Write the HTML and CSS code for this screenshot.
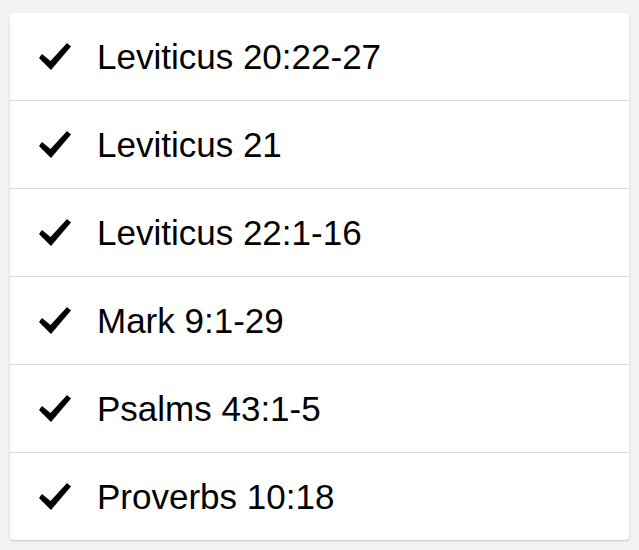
FILE: index.html
```html
<!DOCTYPE html>
<html>
<head>
<meta charset="utf-8">
<link rel="stylesheet" href="styles.css">
</head>
<body>
<div class="card">
  <div class="row"><svg class="check" viewBox="0 0 34 29"><polygon points="4,12 12.5,19 29,1 33,4.5 13,28 1,16" /></svg><span class="label">Leviticus 20:22-27</span></div>
  <div class="row"><svg class="check" viewBox="0 0 34 29"><polygon points="4,12 12.5,19 29,1 33,4.5 13,28 1,16" /></svg><span class="label">Leviticus 21</span></div>
  <div class="row"><svg class="check" viewBox="0 0 34 29"><polygon points="4,12 12.5,19 29,1 33,4.5 13,28 1,16" /></svg><span class="label">Leviticus 22:1-16</span></div>
  <div class="row"><svg class="check" viewBox="0 0 34 29"><polygon points="4,12 12.5,19 29,1 33,4.5 13,28 1,16" /></svg><span class="label">Mark 9:1-29</span></div>
  <div class="row"><svg class="check" viewBox="0 0 34 29"><polygon points="4,12 12.5,19 29,1 33,4.5 13,28 1,16" /></svg><span class="label">Psalms 43:1-5</span></div>
  <div class="row"><svg class="check" viewBox="0 0 34 29"><polygon points="4,12 12.5,19 29,1 33,4.5 13,28 1,16" /></svg><span class="label">Proverbs 10:18</span></div>
</div>
</body>
</html>
```
FILE: styles.css
```css
html, body {
  margin: 0;
  padding: 0;
  background: #f2f2f2;
}
body {
  padding: 13px 10px 10px 10px;
  font-family: "Liberation Sans", Arial, sans-serif;
}
.card {
  background: #fff;
  border-radius: 4px;
  box-shadow: 0 1px 2px rgba(0,0,0,0.18);
  overflow: hidden;
}
.row {
  height: 87px;
  display: flex;
  align-items: center;
  border-bottom: 1px solid #d9d9d9;
  padding-left: 28px;
}
.row:last-child {
  border-bottom: none;
}
.check {
  width: 34px;
  height: 29px;
  flex: none;
  margin-right: 25px;
  fill: #000;
}
.label {
  font-size: 35px;
  color: #000;
  padding-top: 1px;
}
```
